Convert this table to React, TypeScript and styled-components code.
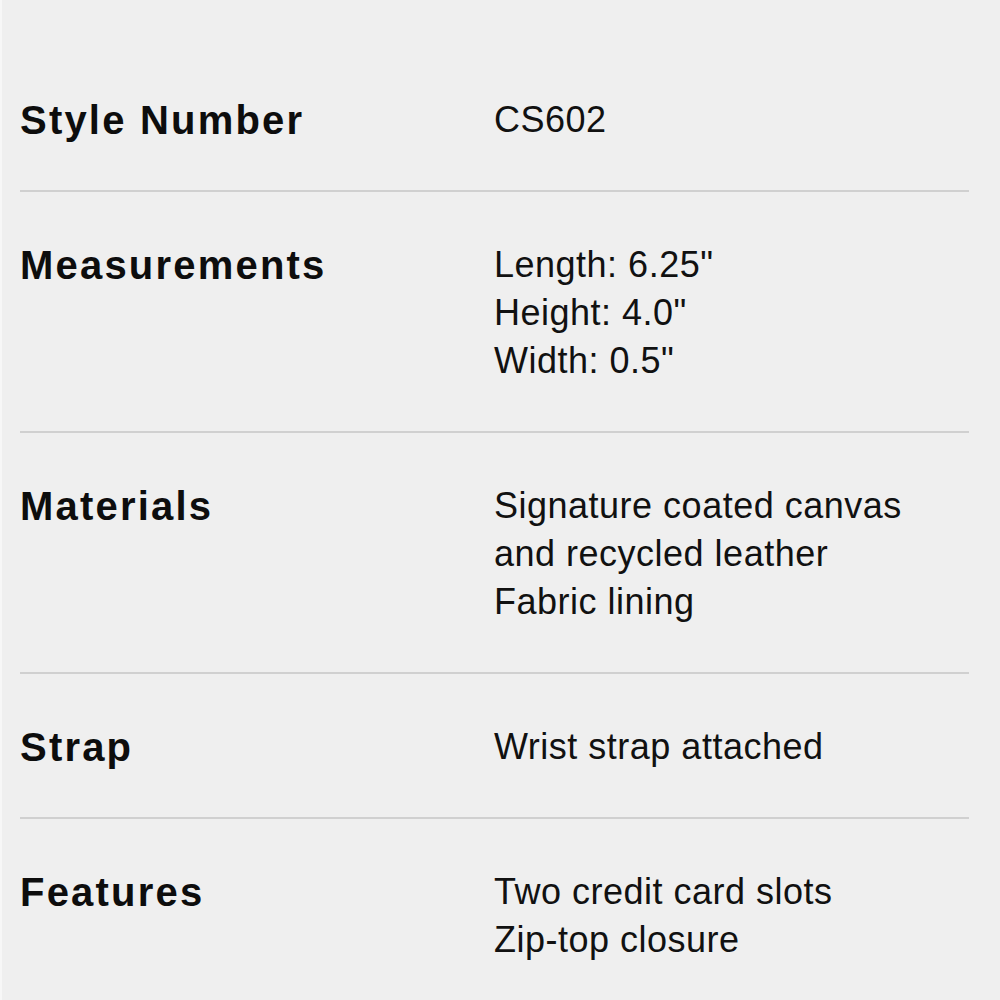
import React from "react";
import styled, { createGlobalStyle } from "styled-components";

const GlobalStyle = createGlobalStyle`
  html, body {
    margin: 0;
    padding: 0;
    background: #efefef;
  }
  body {
    font-family: "Liberation Sans", Arial, Helvetica, sans-serif;
    -webkit-font-smoothing: antialiased;
  }
`;

const Page = styled.div`
  min-height: 1000px;
  box-sizing: border-box;
  background: #efefef;
  border-left: 2px solid #f7f7f7;
  padding: 47px 31px 0 18px;
`;

const SpecList = styled.dl`
  margin: 0;
  padding: 0;
`;

const SpecRow = styled.div<{ $last?: boolean }>`
  display: grid;
  grid-template-columns: 474px 1fr;
  padding: 49px 0 46px;
  border-bottom: 2px solid ${(p) => (p.$last ? "transparent" : "#d0d0d0")};
`;

const Label = styled.dt`
  margin: 0;
  font-size: 40px;
  line-height: 48px;
  font-weight: 700;
  letter-spacing: 2.2px;
  color: #0d0d0d;
`;

const Value = styled.dd`
  margin: 0;
  font-size: 36px;
  line-height: 48px;
  font-weight: 400;
  letter-spacing: 0.5px;
  color: #111111;
`;

const Line = styled.div`
  white-space: nowrap;
`;

const specs: { label: string; lines: string[] }[] = [
  { label: "Style Number", lines: ["CS602"] },
  { label: "Measurements", lines: ['Length: 6.25"', 'Height: 4.0"', 'Width: 0.5"'] },
  {
    label: "Materials",
    lines: ["Signature coated canvas", "and recycled leather", "Fabric lining"],
  },
  { label: "Strap", lines: ["Wrist strap attached"] },
  { label: "Features", lines: ["Two credit card slots", "Zip-top closure"] },
];

export default function App() {
  return (
    <>
      <GlobalStyle />
      <Page>
        <SpecList>
          {specs.map((s, i) => (
            <SpecRow key={s.label} $last={i === specs.length - 1}>
              <Label>{s.label}</Label>
              <Value>
                {s.lines.map((l) => (
                  <Line key={l}>{l}</Line>
                ))}
              </Value>
            </SpecRow>
          ))}
        </SpecList>
      </Page>
    </>
  );
}
